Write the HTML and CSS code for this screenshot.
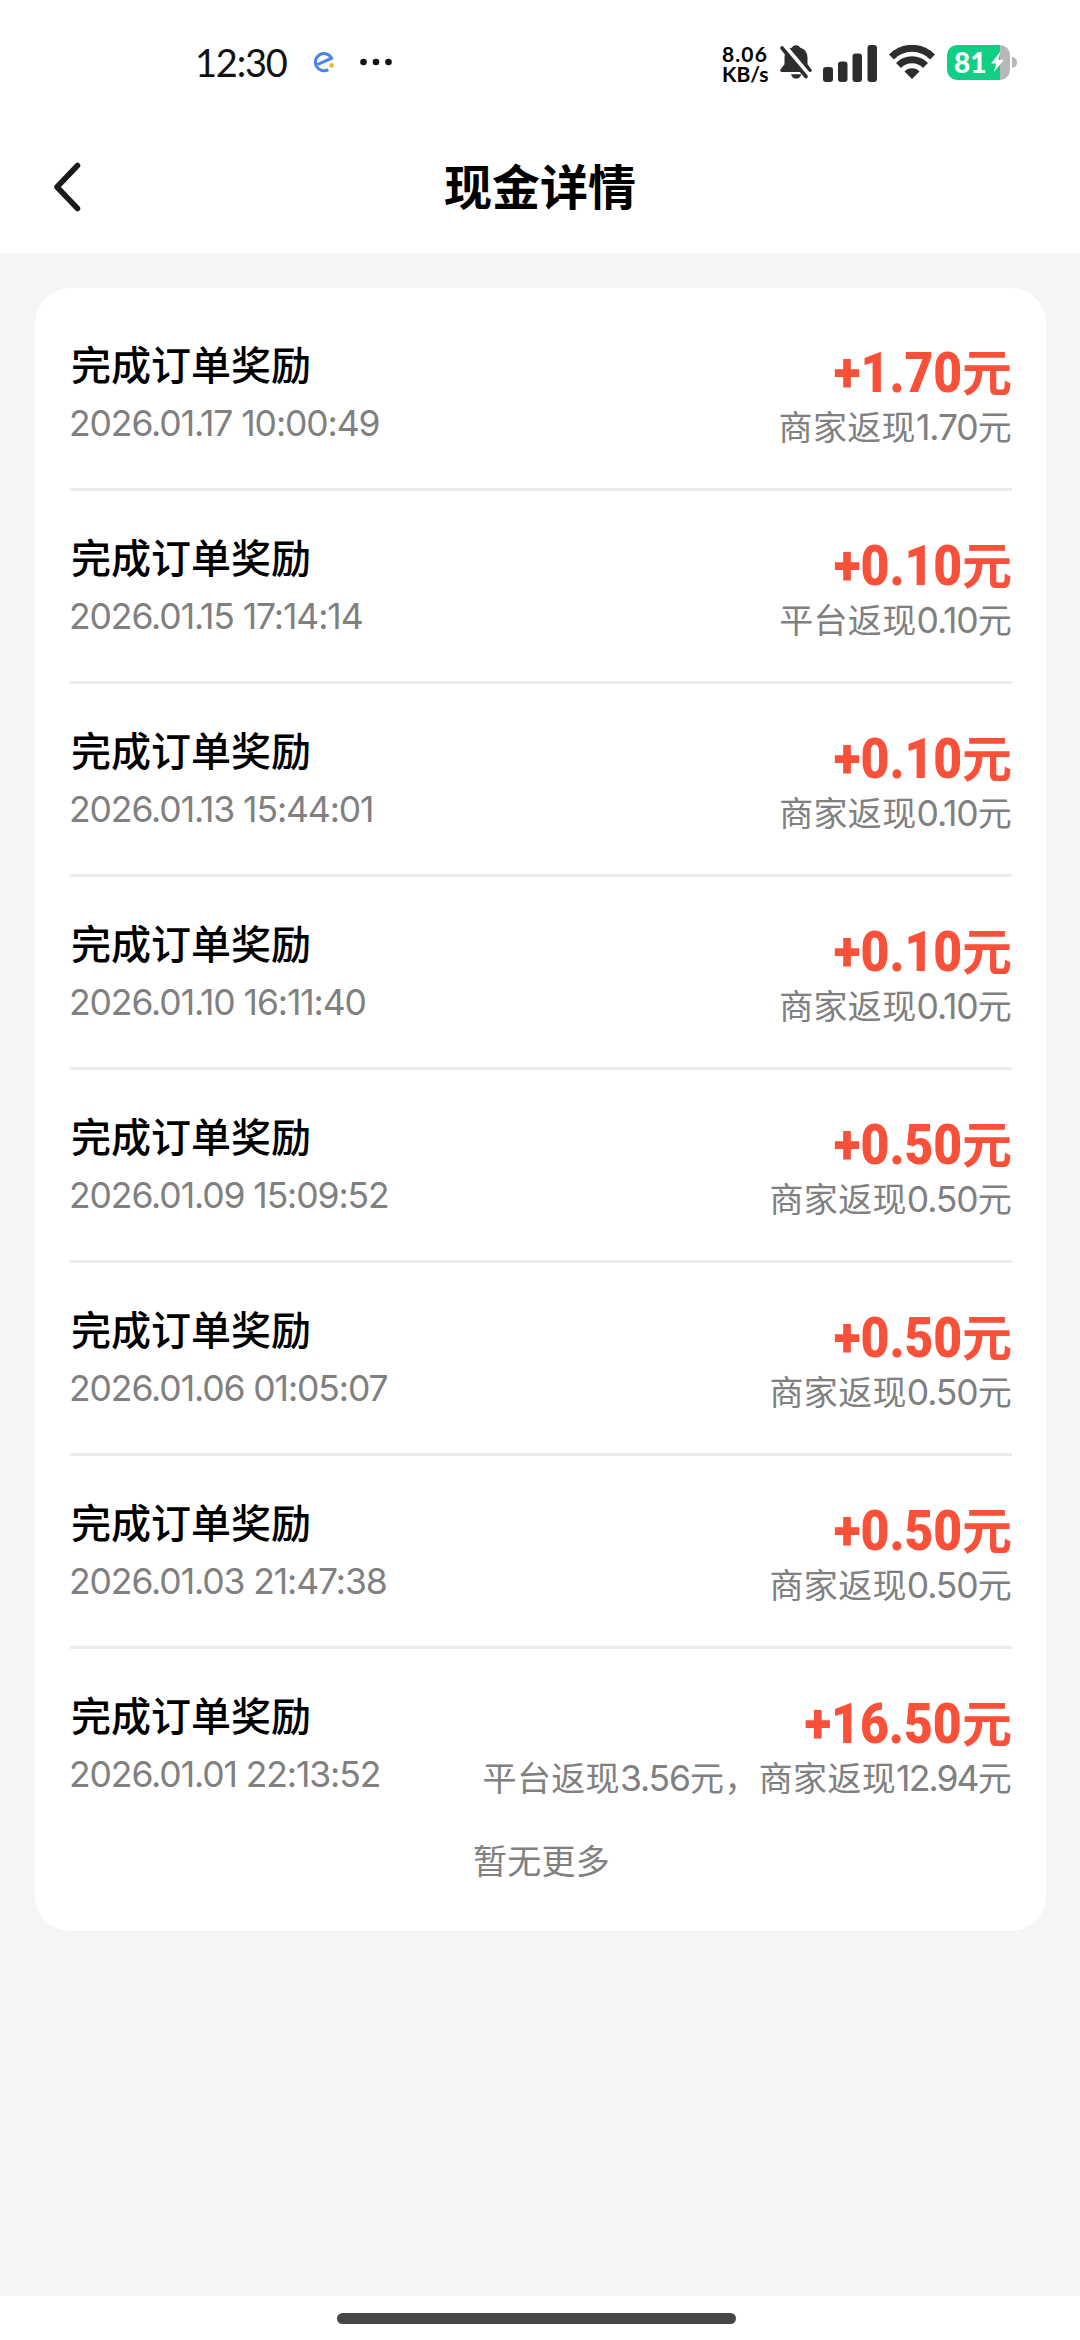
FILE: index.html
```html
<!DOCTYPE html>
<html lang="zh-CN">
<head>
<meta charset="utf-8">
<title>现金详情</title>
<link rel="stylesheet" href="styles.css">
</head>
<body>
<div class="screen">
  <header class="top">
    <div class="status">
      <span class="clock">12:30</span>
      <svg class="app" viewBox="0 0 22 22"><path d="M4.500 13.500 18.600 7.200A8.600 8.600 0 1 0 15.300 18.600" fill="none" stroke="#4a80f0" stroke-width="3"/><circle cx="18.600" cy="14.400" r="2.300" fill="#f2b233"/></svg>
      <svg class="dots" viewBox="0 0 32 8"><g fill="#111"><circle cx="3.500" cy="4" r="3.300"/><circle cx="16" cy="4" r="3.300"/><circle cx="28.500" cy="4" r="3.300"/></g></svg>
      <span class="speed"><span class="rate">8.06</span><span>KB/s</span></span>
      <svg class="bell" viewBox="0 0 34 36"><path d="M17 1.200c1.800 0 3.200.8 4 2.200 4.900 1.500 7.500 5.200 7.500 10.400v6.500l4 5.200c.8 1.500.1 2.500-1.500 2.500H3c-1.600 0-2.300-1-1.500-2.500l4-5.200v-6.500C5.500 8.600 8.100 4.900 13 3.400c.8-1.400 2.200-2.200 4-2.200z" fill="#2d2d2d"/><path d="M12 30.200h10.300c-.9 3-2.700 4.400-5.200 4.400s-4.200-1.400-5.100-4.400z" fill="#2d2d2d"/><path d="M4.500 1 31 32.500" stroke="#fff" stroke-width="5"/><path d="M3 4 27 32.500" stroke="#2d2d2d" stroke-width="3.600" stroke-linecap="round"/></svg>
      <svg class="signal" viewBox="0 0 54 38"><g fill="#2d2d2d"><rect x="0" y="22" width="10" height="15" rx="3"/><rect x="15" y="16.500" width="9.500" height="20.500" rx="3"/><rect x="29.500" y="8.500" width="9.500" height="28.500" rx="3"/><rect x="44.500" y="0" width="9.500" height="37" rx="3"/></g></svg>
      <svg class="wifi" viewBox="0 0 46 34"><g fill="none" stroke="#2d2d2d" stroke-width="7"><path d="M2.500 12a28.500 28.500 0 0 1 41 0"/><path d="M9.500 20.500a19 19 0 0 1 27 0"/></g><path d="M23 34 15.500 26.500a10.500 10.500 0 0 1 15 0z" fill="#2d2d2d"/></svg>
      <span class="battery"><span class="cell"><span>81</span><svg class="bolt" viewBox="0 0 14 22"><path d="M10 0 0 12.500h5.500L3 22 14 8.500H8z" fill="#fff"/></svg></span><i class="tip"></i></span>
    </div>
    <div class="nav">
      <svg class="back" viewBox="0 0 28 50"><path d="M24.500 3.500 4 25l20.500 21.500" fill="none" stroke="#1a1a1a" stroke-width="5.500" stroke-linecap="round" stroke-linejoin="round"/></svg>
      <h1>现金详情</h1>
    </div>
  </header>
  <main>
    <section class="card">
      <article class="row"><div class="left"><h2>完成订单奖励</h2><time>2026.01.17 10:00:49</time></div><div class="right"><p class="amount"><b>+1.70</b>元</p><p class="note">商家返现<i>1.70</i>元</p></div></article>
      <article class="row"><div class="left"><h2>完成订单奖励</h2><time>2026.01.15 17:14:14</time></div><div class="right"><p class="amount"><b>+0.10</b>元</p><p class="note">平台返现<i>0.10</i>元</p></div></article>
      <article class="row"><div class="left"><h2>完成订单奖励</h2><time>2026.01.13 15:44:01</time></div><div class="right"><p class="amount"><b>+0.10</b>元</p><p class="note">商家返现<i>0.10</i>元</p></div></article>
      <article class="row"><div class="left"><h2>完成订单奖励</h2><time>2026.01.10 16:11:40</time></div><div class="right"><p class="amount"><b>+0.10</b>元</p><p class="note">商家返现<i>0.10</i>元</p></div></article>
      <article class="row"><div class="left"><h2>完成订单奖励</h2><time>2026.01.09 15:09:52</time></div><div class="right"><p class="amount"><b>+0.50</b>元</p><p class="note">商家返现<i>0.50</i>元</p></div></article>
      <article class="row"><div class="left"><h2>完成订单奖励</h2><time>2026.01.06 01:05:07</time></div><div class="right"><p class="amount"><b>+0.50</b>元</p><p class="note">商家返现<i>0.50</i>元</p></div></article>
      <article class="row"><div class="left"><h2>完成订单奖励</h2><time>2026.01.03 21:47:38</time></div><div class="right"><p class="amount"><b>+0.50</b>元</p><p class="note">商家返现<i>0.50</i>元</p></div></article>
      <article class="row"><div class="left"><h2>完成订单奖励</h2><time>2026.01.01 22:13:52</time></div><div class="right"><p class="amount"><b>+16.50</b>元</p><p class="note">平台返现<i>3.56</i>元，商家返现<i class="tight">12.94</i>元</p></div></article>
      <p class="more">暂无更多</p>
    </section>
  </main>
  <footer><span class="home"></span></footer>
</div>
</body>
</html>
```

FILE: styles.css
```css
* { box-sizing: border-box; margin: 0; padding: 0; }
body { font-family: Inter, "Noto Sans CJK SC", sans-serif; background: #f5f5f5; color: #000; }
.screen { width: 1080px; height: 2340px; display: flex; flex-direction: column; }
svg { display: block; flex: none; }
.top { height: 253px; background: #fff; }

.status { height: 124px; padding-left: 195px; display: flex; align-items: center; }
.clock { width: 118px; font: 400 38px/48px Lato, sans-serif; letter-spacing: -1.2px; color: #111; }
.app { width: 22px; height: 22px; }
.dots { width: 32px; height: 8px; margin-left: 25px; }
.speed { width: 57px; margin-left: 330px; margin-top: 2px; display: flex; flex-direction: column; gap: 1px; font: 700 21px/19px Lato, sans-serif; }
.rate { letter-spacing: 1.1px; }
.bell { width: 34px; height: 36px; }
.signal { width: 54px; height: 38px; margin: 4px 12px 0 10px; }
.wifi { width: 46px; height: 34px; }
.battery { display: flex; align-items: center; gap: 2px; margin-left: 12px; }
.cell { width: 63px; height: 35px; border-radius: 10px; padding-left: 7px; display: flex; align-items: center; background: linear-gradient(90deg, #10cf84 53px, #b8b8b8 53px); color: #fff; font: 900 28px/34px Lato, sans-serif; }
.bolt { width: 13px; height: 22px; margin-left: 5px; }
.tip { width: 5px; height: 11px; border-radius: 0 5px 5px 0; background: #b8b8b8; }

.nav { height: 126px; padding-left: 53px; display: flex; align-items: center; }
.back { width: 28px; height: 50px; }
.nav h1 { flex: 1; margin: 2px 81px 0 0; text-align: center; font-size: 48px; font-weight: 700; line-height: 60px; }

main { flex: 1; padding: 35px 34px 0 35px; }
.card { height: 1643px; padding: 10px 34px 0 35px; border-radius: 35px; background: #fff; }
.row { height: 193px; display: flex; justify-content: space-between; border-bottom: 3px solid #ebebeb; }
.row:nth-child(8) { border-bottom-color: transparent; }
.left { padding-top: 43px; }
.left h2 { padding-left: 1px; font-size: 40px; font-weight: 500; line-height: 50px; }
time { display: block; margin: 10px 0 0 -1px; font-size: 35.5px; line-height: 46px; letter-spacing: -1.1px; color: #808080; white-space: nowrap; }
.right { padding-top: 45px; display: flex; flex-direction: column; align-items: flex-end; white-space: nowrap; }
.amount { display: flex; font-size: 50px; font-weight: 700; line-height: 60px; color: #f9503a; }
.amount b { font-family: Roboto, sans-serif; font-size: 56px; transform: scaleX(.89); transform-origin: right; }
.note { margin-top: 2px; font-size: 34px; line-height: 46px; letter-spacing: .35px; color: #808080; }
.note i { font-style: normal; font-size: 35.5px; letter-spacing: -1.1px; }
.note .tight { letter-spacing: -1.9px; }
.more { margin-top: -3px; padding-left: 1px; text-align: center; font-size: 34px; line-height: 46px; letter-spacing: .3px; color: #808080; }

footer { height: 44px; background: #fff; display: flex; justify-content: center; padding: 17px 7px 0 0; }
.home { width: 399px; height: 11px; border-radius: 6px; background: #474747; }
```
